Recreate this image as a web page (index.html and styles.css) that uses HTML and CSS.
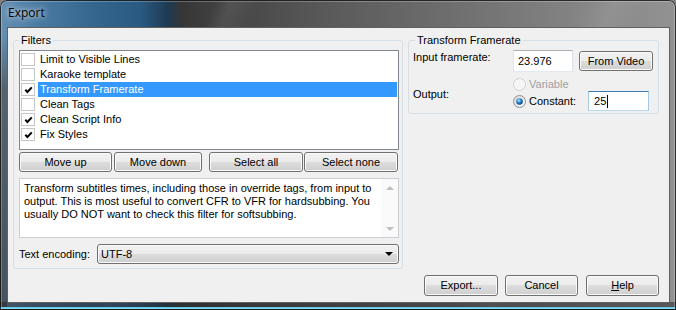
FILE: index.html
```html
<!DOCTYPE html>
<html>
<head>
<meta charset="utf-8">
<title>Export</title>
<link rel="stylesheet" href="styles.css">
</head>
<body>
<div class="window">
  <div class="titlebar"><span class="title">Export</span></div>
  <div class="client">
    <div class="main">
      <fieldset class="group filters">
        <legend>Filters</legend>
        <div class="list">
          <div class="item"><span class="chk"></span><span class="lbl">Limit to Visible Lines</span></div>
          <div class="item"><span class="chk"></span><span class="lbl">Karaoke template</span></div>
          <div class="item sel"><span class="chk"><svg viewBox="0 0 12 11" width="12" height="11"><polyline points="3.3,5.8 5.4,8 9.8,3.4" fill="none" stroke="#000" stroke-width="2"/></svg></span><span class="lbl">Transform Framerate</span></div>
          <div class="item"><span class="chk"></span><span class="lbl">Clean Tags</span></div>
          <div class="item"><span class="chk"><svg viewBox="0 0 12 11" width="12" height="11"><polyline points="3.3,5.8 5.4,8 9.8,3.4" fill="none" stroke="#000" stroke-width="2"/></svg></span><span class="lbl">Clean Script Info</span></div>
          <div class="item"><span class="chk"><svg viewBox="0 0 12 11" width="12" height="11"><polyline points="3.3,5.8 5.4,8 9.8,3.4" fill="none" stroke="#000" stroke-width="2"/></svg></span><span class="lbl">Fix Styles</span></div>
        </div>
        <div class="btnrow">
          <button class="btn b-up">Move up</button>
          <button class="btn b-down">Move down</button>
          <button class="btn b-all">Select all</button>
          <button class="btn b-none">Select none</button>
        </div>
        <div class="desc">
          <p class="desc-text">Transform subtitles times, including those in override tags, from input to output. This is most useful to convert CFR to VFR for hardsubbing. You usually DO NOT want to check this filter for softsubbing.</p>
          <div class="vscroll"><span class="arr up"></span><span class="arr down"></span></div>
        </div>
        <div class="enc">
          <span class="enc-label">Text encoding:</span>
          <div class="combo"><span class="combo-val">UTF-8</span><span class="combo-arrow"></span></div>
        </div>
      </fieldset>
      <fieldset class="group framerate">
        <legend>Transform Framerate</legend>
        <div class="fr-row fr-in">
          <span class="fr-label">Input framerate:</span>
          <div class="textbox tb-in">23.976</div>
          <button class="btn b-video">From Video</button>
        </div>
        <div class="fr-row fr-out">
          <span class="fr-label">Output:</span>
          <div class="radios">
            <div class="radio disabled"><svg viewBox="0 0 13 13" width="13" height="13"><circle cx="6.5" cy="6.5" r="6" fill="#f5f5f5" stroke="#cfcfcf"/><circle cx="6.5" cy="6.5" r="4.5" fill="none" stroke="#fbfbfb"/></svg>Variable</div>
            <div class="radio on"><svg viewBox="0 0 13 13" width="13" height="13"><defs><linearGradient id="rg" x1="0" y1="0" x2="1" y2="1"><stop offset="0" stop-color="#d8d8d8"/><stop offset="1" stop-color="#fdfdfd"/></linearGradient><radialGradient id="dot" cx="0.4" cy="0.35" r="0.7"><stop offset="0" stop-color="#b8ecfc"/><stop offset="0.45" stop-color="#2d8fd2"/><stop offset="1" stop-color="#0b3768"/></radialGradient></defs><circle cx="6.5" cy="6.5" r="6" fill="url(#rg)" stroke="#8e8f8f"/><circle cx="6.5" cy="6.5" r="3.3" fill="url(#dot)"/></svg>Constant:<div class="textbox tb-out">25<span class="caret"></span></div></div>
          </div>
        </div>
      </fieldset>
    </div>
    <div class="footer">
      <button class="btn b-export">Export...</button>
      <button class="btn b-cancel">Cancel</button>
      <button class="btn b-help"><u>H</u>elp</button>
    </div>
  </div>
</div>
</body>
</html>
```

FILE: styles.css
```css
html, body {
  margin: 0;
  padding: 0;
  background: #808080;
}

body {
  font: 11px/13px "Liberation Sans", Arial, sans-serif;
  color: #000;
}

.window {
  width: 676px;
  height: 310px;
  box-sizing: border-box;
  border-radius: 7px 7px 0 0;
  overflow: hidden;
  display: flex;
  flex-direction: column;
  background:
    linear-gradient(to top, #1c1c1c 0 1px, #5ccbec 1px 3px, rgba(40, 40, 40, 0.55) 3px 8px, transparent 8px),
    linear-gradient(180deg, transparent 0 36px, #55616d 90px, #46525e 100%) left top / 7px 100% no-repeat,
    linear-gradient(112deg, transparent 0 200px, rgba(255, 255, 255, 0.07) 215px, transparent 240px, transparent 540px, rgba(255, 255, 255, 0.08) 570px, transparent 600px),
    linear-gradient(90deg, #6690b4 0, #4a7aa1 40px, #32648c 100px, #2a5a82 140px, #1e3a52 168px, #363636 182px, #454545 230px, #5a5a5a 330px, #6e6e6e 450px, #848484 580px, #929292 676px);
  box-shadow: inset 0 0 0 1px rgba(0, 0, 0, 0.75), inset 0 0 0 2px rgba(255, 255, 255, 0.25);
}

.titlebar {
  height: 27px;
  flex: none;
  display: flex;
  align-items: center;
  padding-left: 8px;
  padding-bottom: 1px;
  box-sizing: border-box;
}

.title {
  font: 12px/16px "Open Sans", "Noto Sans", sans-serif;
  color: #000;
  text-shadow: 0 0 5px rgba(255, 255, 255, 0.8), 0 0 9px rgba(255, 255, 255, 0.5);
}

.client {
  margin: 0 6px 0 7px;
  height: 276px;
  box-sizing: border-box;
  border: 1px solid rgba(0, 0, 0, 0.6);
  background: #f0f0f0;
  padding: 6px 10px 6px 5px;
  display: flex;
  flex-direction: column;
}

.main {
  display: flex;
  gap: 5px;
  align-items: flex-start;
}

.group {
  margin: 0;
  min-width: 0;
  box-sizing: border-box;
  border: 1px solid #d5dfe5;
  border-radius: 3px;
}

.group legend {
  padding: 0 2px;
  line-height: 13px;
}

.filters {
  width: 390px;
  padding: 3px 3px 4px 5px;
}

.framerate {
  width: 251px;
  padding: 3px 4px 2px 4px;
}

.framerate legend {
  margin-left: 2px;
}

/* list */
.list {
  height: 100px;
  box-sizing: border-box;
  border: 1px solid #828790;
  background: #fff;
  padding: 1px 1px 0 1px;
}

.item {
  display: flex;
  align-items: center;
  height: 15px;
}

.chk {
  width: 14px;
  height: 13px;
  box-sizing: border-box;
  border: 1px solid #c6c6c6;
  background: #fff;
  margin-right: 3px;
  display: flex;
}

.lbl {
  flex: 1;
  height: 15px;
  line-height: 15px;
  padding-left: 2px;
}

.sel .lbl {
  background: #3399ff;
  color: #fff;
}

/* buttons */
.btn {
  font: inherit;
  color: #000;
  box-sizing: border-box;
  height: 20px;
  padding: 0;
  border: 1px solid #707070;
  border-radius: 3px;
  background: linear-gradient(#f2f2f2, #ebebeb 50%, #dddddd 50%, #cfcfcf);
  box-shadow: inset 0 0 0 1px #fbfbfb;
  display: flex;
  align-items: center;
  justify-content: center;
  line-height: 13px;
}

.btnrow {
  display: flex;
  margin-top: 2px;
}

.b-up { width: 93px; }
.b-down { width: 88px; margin-left: 2px; }
.b-all { width: 94px; margin-left: 7px; }
.b-none { width: 94px; margin-left: 1px; }

/* description */
.desc {
  margin-top: 6px;
  height: 60px;
  box-sizing: border-box;
  border: 1px solid #cbcfd4;
  background: #fff;
  display: flex;
}

.desc-text {
  margin: 0;
  flex: 1;
  padding: 3px 0 0 4px;
  line-height: 13px;
}

.vscroll {
  width: 17px;
  flex: none;
  display: flex;
  flex-direction: column;
  justify-content: space-between;
  background: #fafafa;
}

.arr {
  height: 17px;
  display: flex;
  align-items: center;
  justify-content: center;
}

.arr::before {
  content: "";
  border-left: 4px solid transparent;
  border-right: 4px solid transparent;
}

.up::before { border-bottom: 4px solid #c0c0c0; }
.down::before { border-top: 4px solid #c0c0c0; }

/* encoding */
.enc {
  margin-top: 6px;
  display: flex;
  align-items: center;
  height: 20px;
}

.enc-label {
  width: 78px;
}

.combo {
  flex: 1;
  height: 20px;
  box-sizing: border-box;
  border: 1px solid #707070;
  border-radius: 3px;
  background: linear-gradient(#f2f2f2, #ebebeb 50%, #dddddd 50%, #cfcfcf);
  box-shadow: inset 0 0 0 1px #fbfbfb;
  display: flex;
  align-items: center;
  padding: 0 5px 0 3px;
}

.combo-val {
  flex: 1;
}

.combo-arrow {
  border-left: 4px solid transparent;
  border-right: 4px solid transparent;
  border-top: 4px solid #000;
}

/* framerate */
.fr-row {
  display: flex;
  align-items: center;
}

.fr-in {
  height: 22px;
}

.fr-label {
  width: 100px;
  flex: none;
}

.fr-in .fr-label {
  align-self: flex-start;
  margin-top: 1px;
}

.textbox {
  box-sizing: border-box;
  background: #fff;
  border: 1px solid;
  border-color: #abadb3 #dbdfe6 #e3e9ef #e2e3ea;
  padding-left: 4px;
  display: flex;
  align-items: center;
}

.tb-in {
  width: 60px;
  height: 22px;
}

.b-video {
  width: 74px;
  margin-left: 6px;
}

.fr-out {
  margin-top: 6px;
}

.radios {
  display: flex;
  flex-direction: column;
}

.radio {
  display: flex;
  align-items: center;
}

.radio svg {
  margin-right: 3px;
  flex: none;
}

.radio.disabled {
  height: 13px;
  color: #a0a0a0;
}

.radio.on {
  height: 20px;
}

.tb-out {
  width: 61px;
  height: 20px;
  margin-left: 12px;
  padding-left: 5px;
  border-color: #3d7bad #a4c9e3 #b7d9ed #a4c9e3;
}

.caret {
  width: 1px;
  height: 13px;
  background: #000;
  margin-left: 1px;
}

/* footer */
.footer {
  margin-top: 6px;
  display: flex;
  justify-content: flex-end;
}

.footer .btn {
  height: 21px;
}

.b-export { width: 74px; margin-right: 7px; }
.b-cancel { width: 73px; margin-right: 8px; }
.b-help { width: 73px; }

.b-help u {
  text-decoration: underline;
}
```
